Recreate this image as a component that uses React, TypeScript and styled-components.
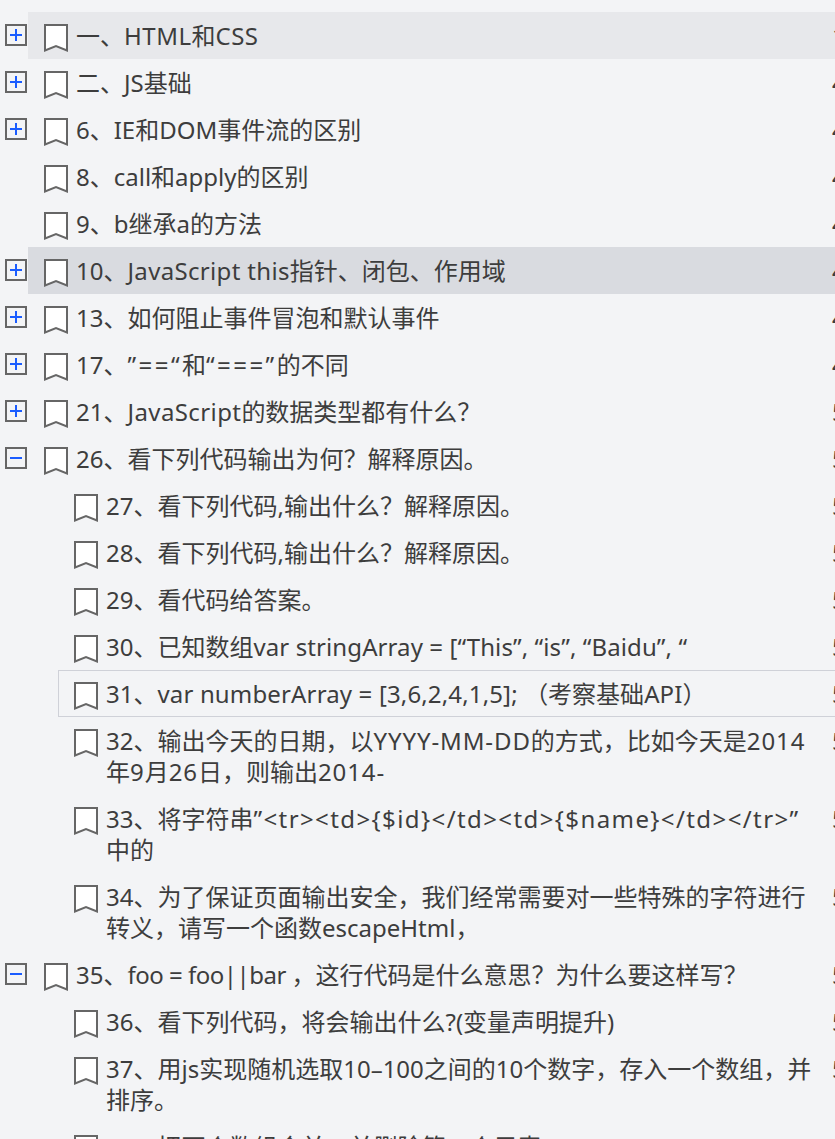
import { createGlobalStyle } from 'styled-components';
import styled from 'styled-components';

type ToggleKind = 'plus' | 'minus' | 'none';
type RowState = 'normal' | 'hover' | 'selected' | 'focus';

interface OutlineItem {
  title: string;
  page: number;
  level: 1 | 2;
  toggle?: ToggleKind;
  state?: RowState;
  tracking?: number;
}

const items: OutlineItem[] = [
  { title: '一、HTML和CSS', page: 1, level: 1, toggle: 'plus', state: 'hover', tracking: 0.5 },
  { title: '二、JS基础', page: 4, level: 1, toggle: 'plus' },
  { title: '6、IE和DOM事件流的区别', page: 4, level: 1, toggle: 'plus' },
  { title: '8、call和apply的区别', page: 4, level: 1 },
  { title: '9、b继承a的方法', page: 4, level: 1 },
  { title: '10、JavaScript this指针、闭包、作用域', page: 4, level: 1, toggle: 'plus', state: 'selected', tracking: 0.33 },
  { title: '13、如何阻止事件冒泡和默认事件', page: 4, level: 1, toggle: 'plus' },
  { title: '17、”==“和“===”的不同', page: 4, level: 1, toggle: 'plus', tracking: 2.45 },
  { title: '21、JavaScript的数据类型都有什么？', page: 5, level: 1, toggle: 'plus', tracking: 0.4 },
  { title: '26、看下列代码输出为何？解释原因。', page: 5, level: 1, toggle: 'minus' },
  { title: '27、看下列代码,输出什么？解释原因。', page: 5, level: 2 },
  { title: '28、看下列代码,输出什么？解释原因。', page: 5, level: 2 },
  { title: '29、看代码给答案。', page: 5, level: 2 },
  { title: '30、已知数组var stringArray = [“This”, “is”, “Baidu”, “', page: 5, level: 2, tracking: 0.1 },
  { title: '31、var numberArray = [3,6,2,4,1,5]; （考察基础API）', page: 5, level: 2, state: 'focus', tracking: 0.15 },
  { title: '32、输出今天的日期，以YYYY-MM-DD的方式，比如今天是2014年9月26日，则输出2014-', page: 5, level: 2, tracking: 0.9 },
  { title: '33、将字符串”<tr><td>{$id}</td><td>{$name}</td></tr>”\u200B中的', page: 5, level: 2, tracking: 1.4 },
  { title: '34、为了保证页面输出安全，我们经常需要对一些特殊的字符进行转义，请写一个函数escapeHtml，', page: 5, level: 2 },
  { title: '35、foo = foo||bar ，这行代码是什么意思？为什么要这样写？', page: 5, level: 1, toggle: 'minus', tracking: -0.5 },
  { title: '36、看下列代码，将会输出什么?(变量声明提升)', page: 5, level: 2 },
  { title: '37、用js实现随机选取10–100之间的10个数字，存入一个数组，并排序。', page: 5, level: 2 },
  { title: '38、把两个数组合并，并删除第二个元素。', page: 5, level: 2 },
];

const GlobalStyle = createGlobalStyle`
  html, body {
    margin: 0;
    height: 100%;
    overflow: hidden;
    background: #f3f4f6;
  }
`;

const Outline = styled.div`
  width: 835px;
  height: 1139px;
  padding-top: 12px;
  box-sizing: border-box;
  overflow: hidden;
  font-family: 'Noto Sans', 'Noto Sans CJK SC', sans-serif;
  font-size: 24px;
  color: #3d3d3d;
`;

const Row = styled.div`
  display: flex;
  align-items: flex-start;
`;

const ToggleSlot = styled.div<{ $level: number }>`
  flex: 0 0 ${(p) => (p.$level === 1 ? 28 : 58)}px;
  box-sizing: border-box;
  padding: 12px 0 0 5px;
`;

const ToggleBox = styled.svg`
  display: block;
  width: 22px;
  height: 22px;
`;

const Body = styled.div<{ $state: RowState }>`
  flex: 1;
  min-width: 0;
  display: flex;
  align-items: flex-start;
  box-sizing: border-box;
  padding: 8px 0 7px 16px;
  background: ${(p) =>
    p.$state === 'hover' ? '#e7e8eb' : p.$state === 'selected' ? '#d9dbe0' : 'transparent'};
  box-shadow: ${(p) =>
    p.$state === 'focus' ? 'inset 1px 1px 0 #cfd1d8, inset 0 -1px 0 #cfd1d8' : 'none'};
`;

const Mark = styled.svg`
  flex: 0 0 24px;
  width: 24px;
  height: 28px;
  margin-top: 4px;
`;

const Title = styled.div<{ $level: number }>`
  flex: 0 0 ${(p) => (p.$level === 1 ? 764 : 734)}px;
  box-sizing: border-box;
  padding: 0 12px 1px 8px;
  line-height: 31px;
  text-spacing-trim: space-all;
`;

const Latin = styled.span<{ $tracking: number }>`
  letter-spacing: ${(p) => p.$tracking}px;
`;

const Page = styled.span`
  flex: none;
  line-height: 31px;
`;

const Toggle = ({ kind }: { kind: ToggleKind }) => (
  <ToggleBox viewBox="0 0 22 22">
    <rect x="1" y="1" width="20" height="20" fill="none" stroke="#666" strokeWidth="2" />
    <path d="M5 11h12" stroke="#1a5cff" strokeWidth="2" />
    {kind === 'plus' && <path d="M11 5v12" stroke="#1a5cff" strokeWidth="2" />}
  </ToggleBox>
);

const Bookmark = () => (
  <Mark viewBox="0 0 24 28">
    <path d="M1 1h22v25.5l-11-4.5-11 4.5z" fill="#fff" stroke="#666" strokeWidth="2" />
  </Mark>
);

// the latin runs in the reference are wider or narrower than Noto Sans, so only those get tracked
const renderTitle = (title: string, tracking: number) => {
  const number = title.match(/^\d+/)?.[0] ?? '';
  const rest = title.slice(number.length);
  return [
    number,
    ...rest.split(/([^\u3000-\u303f\u4e00-\u9fff\uff00-\uffef]+)/).map((part, i) =>
      i % 2 === 1 ? (
        <Latin key={i} $tracking={tracking}>
          {part}
        </Latin>
      ) : (
        part
      ),
    ),
  ];
};

export default function App() {
  return (
    <Outline>
      <GlobalStyle />
      {items.map((item) => {
        const toggle = item.toggle ?? 'none';
        return (
          <Row key={item.title}>
            <ToggleSlot $level={item.level}>
              {toggle !== 'none' && <Toggle kind={toggle} />}
            </ToggleSlot>
            <Body $state={item.state ?? 'normal'}>
              <Bookmark />
              <Title $level={item.level}>{renderTitle(item.title, item.tracking ?? 0)}</Title>
              <Page>{item.page}</Page>
            </Body>
          </Row>
        );
      })}
    </Outline>
  );
}
